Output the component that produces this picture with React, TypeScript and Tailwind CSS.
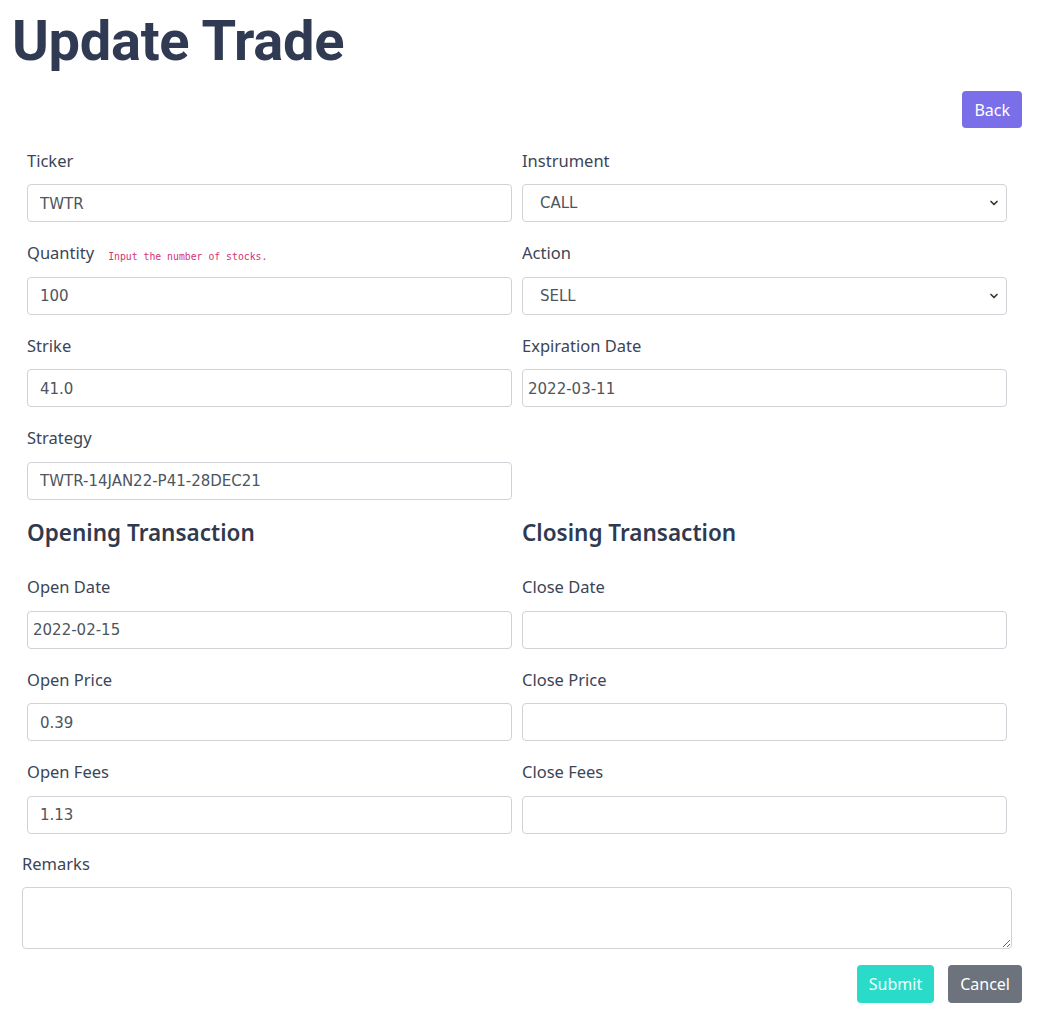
import { ChevronDown } from "lucide-react";

const plex = { fontFamily: "'Noto Sans', 'Open Sans', sans-serif" };

function Label({ text, hint }: { text: string; hint?: string }) {
  return (
    <div className="mb-[11px] flex h-6 items-center text-[16.5px] text-[#3b4556]" style={plex}>
      <span>{text}</span>
      {hint && (
        <span className="ml-[14px] mt-[7px] font-['DejaVu_Sans_Mono',monospace] text-[9.8px] text-[#d33474]">
          {hint}
        </span>
      )}
    </div>
  );
}

function TextField({ label, value, hint, date }: { label: string; value?: string; hint?: string; date?: boolean }) {
  return (
    <div className="px-[5px] pb-[19.5px]">
      <Label text={label} hint={hint} />
      <input
        type="text"
        defaultValue={value}
        className={`block h-[38px] w-full rounded-[4px] border border-[#cfd3d8] bg-white pt-[1px] font-['DejaVu_Sans',sans-serif] text-[15px] text-[#4d555e] outline-none ${
          date ? "pl-[5px]" : "pl-[12px]"
        }`}
      />
    </div>
  );
}

function SelectField({ label, value }: { label: string; value: string }) {
  return (
    <div className="px-[5px] pb-[19.5px]">
      <Label text={label} />
      <div className="relative">
        <select
          defaultValue={value}
          className="block h-[38px] w-full appearance-none rounded-[4px] border border-[#cfd3d8] bg-white pl-[17px] pt-[1px] font-['DejaVu_Sans',sans-serif] text-[15px] text-[#4d555e] outline-none"
        >
          <option>{value}</option>
        </select>
        <ChevronDown
          className="pointer-events-none absolute right-[7px] top-[13px] h-[12px] w-[12px] text-[#3a3a3a]"
          strokeWidth={3.5}
        />
      </div>
    </div>
  );
}

function SectionTitle({ text }: { text: string }) {
  return (
    <h2 className="px-[5px] pt-[17px] pb-[27px] text-[22.5px] font-semibold leading-[32px] text-[#2f3a4f]" style={plex}>
      {text}
    </h2>
  );
}

export default function App() {
  return (
    <div className="min-h-[1020px] bg-white">
      <h1 className="pl-[12px] pt-[3px] font-['Roboto',sans-serif] text-[56px] font-bold leading-[77px] tracking-[-0.3px] text-[#303b53]">
        Update Trade
      </h1>
      <div className="flex justify-end pr-[19px] pt-[11px]">
        <button className="h-[37px] rounded-[4px] bg-[#7b6fe9] px-[12px] text-[16px] text-white" style={plex}>
          Back
        </button>
      </div>
      <form className="pl-[22px] pr-[29px] pt-[21px]">
        <div className="grid grid-cols-2">
          <TextField label="Ticker" value="TWTR" />
          <SelectField label="Instrument" value="CALL" />
          <TextField label="Quantity" value="100" hint="Input the number of stocks." />
          <SelectField label="Action" value="SELL" />
          <TextField label="Strike" value="41.0" />
          <TextField label="Expiration Date" value="2022-03-11" date />
          <TextField label="Strategy" value="TWTR-14JAN22-P41-28DEC21" />
          <div />
        </div>
        <div className="-mt-[19.5px] grid grid-cols-2">
          <div>
            <SectionTitle text="Opening Transaction" />
            <TextField label="Open Date" value="2022-02-15" date />
            <TextField label="Open Price" value="0.39" />
            <TextField label="Open Fees" value="1.13" />
          </div>
          <div>
            <SectionTitle text="Closing Transaction" />
            <TextField label="Close Date" date />
            <TextField label="Close Price" />
            <TextField label="Close Fees" />
          </div>
        </div>
        <div className="-mt-[1px]">
          <Label text="Remarks" />
          <textarea className="block h-[62px] w-full rounded-[4px] border border-[#cfd3d8] bg-white outline-none" />
        </div>
        <div className="flex justify-end gap-[14px] pt-[16px]">
          <button className="h-[38px] rounded-[4px] bg-[#2bdbc9] px-[12px] text-[16px] text-[#f0fffd]" style={plex}>
            Submit
          </button>
          <button className="-mr-[10px] h-[38px] rounded-[4px] bg-[#6c737d] px-[12px] text-[16px] text-white" style={plex}>
            Cancel
          </button>
        </div>
      </form>
    </div>
  );
}
